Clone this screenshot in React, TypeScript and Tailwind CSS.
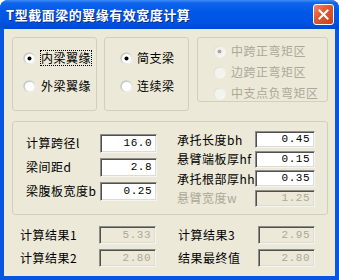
import React from "react";

const F = "font-['Noto_Sans_CJK_SC',sans-serif]";

function Radio({ checked, disabled }: { checked?: boolean; disabled?: boolean }) {
  const id = disabled ? "rgd" : "rge";
  return (
    <svg width="13" height="13" viewBox="0 0 13 13" className="shrink-0">
      <defs>
        <linearGradient id={id} x1="0" y1="0" x2="1" y2="1">
          <stop offset="0" stopColor={disabled ? "#dcdad0" : "#b8b8b0"} />
          <stop offset="1" stopColor="#ffffff" />
        </linearGradient>
      </defs>
      <circle cx="6.5" cy="6.5" r="6.2" fill={`url(#${id})`} />
      <circle cx="6.5" cy="6.5" r="4.6" fill={disabled ? "#f4f3ee" : "#ffffff"} />
      {checked && <circle cx="6.5" cy="6.5" r="2" fill={disabled ? "#aca899" : "#000000"} />}
    </svg>
  );
}

function RadioRow({ label, checked, disabled, focus, gap }: { label: string; checked?: boolean; disabled?: boolean; focus?: boolean; gap: string }) {
  return (
    <div className={`flex items-center h-[16px] ${gap}`}>
      <Radio checked={checked} disabled={disabled} />
      <span
        className={`text-[12px] tracking-[0.5px] leading-[14px] whitespace-nowrap ${disabled ? "text-[#aca899]" : "text-black"} ${focus ? "outline outline-1 outline-dotted outline-black" : ""}`}
      >
        {label}
      </span>
    </div>
  );
}

function Input({ value, disabled, h, w }: { value: string; disabled?: boolean; h: string; w: string }) {
  return (
    <div
      className={`${w} ${h} shrink-0 flex items-center justify-end pr-[4px] border border-t-[#8d8d8d] border-l-[#8d8d8d] border-r-[#f4f4f4] border-b-[#f4f4f4] shadow-[inset_1px_1px_0_#505050,inset_-1px_-1px_0_#dcdcd4] font-['Liberation_Mono',monospace] text-[11px] ${disabled ? "bg-[#ece9d8] text-[#aca899]" : "bg-white text-black"}`}
    >
      {value}
    </div>
  );
}

export default function App() {
  return (
    <div className={`w-[339px] h-[280px] bg-white ${F}`}>
      <div className="w-[339px] h-[280px] rounded-t-[8px] bg-[#0a55e0] flex flex-col overflow-hidden">
        {/* title bar */}
        <div className="h-[29px] shrink-0 flex items-center justify-between pl-[6px] pr-[5px] bg-[linear-gradient(to_bottom,#3c8df6_0%,#1064ec_10%,#0058e8_40%,#0054e3_75%,#0048d4_100%)]">
          <span className="text-white font-bold text-[13px] tracking-[0.5px] leading-[16px] whitespace-nowrap [text-shadow:1px_1px_0_#0a2a8a] mt-[1px]">
            T型截面梁的翼缘有效宽度计算
          </span>
          <div className="w-[21px] h-[21px] rounded-[3px] border border-white bg-[linear-gradient(135deg,#f08a6a_0%,#e05a32_40%,#c8401c_100%)] flex items-center justify-center">
            <svg width="11" height="11" viewBox="0 0 11 11">
              <path d="M1.5 1.5 L9.5 9.5 M9.5 1.5 L1.5 9.5" stroke="#ffffff" strokeWidth="2" strokeLinecap="square" />
            </svg>
          </div>
        </div>
        {/* body */}
        <div className="flex-1 mx-[4px] mb-[4px] bg-[#ece9d8] flex flex-col pl-[8px] pt-[8px]">
          {/* top row */}
          <div className="flex items-start">
            <div className="w-[85px] h-[74px] border border-[#d0d0bf] rounded-[3px] flex flex-col pt-[12px] gap-[12px] pl-[10px]">
              <RadioRow label="内梁翼缘" checked focus gap="gap-[5px]" />
              <RadioRow label="外梁翼缘" gap="gap-[5px]" />
            </div>
            <div className="ml-[7px] w-[85px] h-[74px] border border-[#d0d0bf] rounded-[3px] flex flex-col pt-[12px] gap-[12px] pl-[15px]">
              <RadioRow label="简支梁" checked gap="gap-[4px]" />
              <RadioRow label="连续梁" gap="gap-[4px]" />
            </div>
            <div className="ml-[8px] w-[131px] h-[65px] border border-[#d0d0bf] rounded-[3px] flex flex-col pt-[5px] gap-[5px] pl-[15px]">
              <RadioRow label="中跨正弯矩区" checked disabled gap="gap-[5px]" />
              <RadioRow label="边跨正弯矩区" disabled gap="gap-[5px]" />
              <RadioRow label="中支点负弯矩区" disabled gap="gap-[5px]" />
            </div>
          </div>
          {/* middle group */}
          <div className="mt-[10px] w-[316px] h-[94px] border border-[#d0d0bf] rounded-[3px] flex pl-[13px] text-[12px] tracking-[0.5px] text-black">
            <div className="w-[151px] shrink-0 flex flex-col pt-[11px] gap-[4px]">
              {[
                ["计算跨径l", "16.0"],
                ["梁间距d", "2.8"],
                ["梁腹板宽度b", "0.25"],
              ].map(([l, v]) => (
                <div key={l} className="flex items-center h-[20px]">
                  <span className="w-[74px] whitespace-nowrap leading-[14px]">{l}</span>
                  <Input value={v} w="w-[57px]" h="h-[19px]" />
                </div>
              ))}
            </div>
            <div className="flex flex-col pt-[9px] gap-[2.5px]">
              {[
                ["承托长度bh", "0.45", false],
                ["悬臂端板厚hf", "0.15", false],
                ["承托根部厚hh", "0.35", false],
                ["悬臂宽度w", "1.25", true],
              ].map(([l, v, d]) => (
                <div key={l as string} className="flex items-center h-[17px]">
                  <span className={`w-[78px] whitespace-nowrap leading-[14px] ${d ? "text-[#aca899]" : ""}`}>{l as string}</span>
                  <Input value={v as string} disabled={d as boolean} w="w-[60px]" h="h-[17px]" />
                </div>
              ))}
            </div>
          </div>
          {/* results */}
          <div className="mt-[11px] pl-[8px] flex flex-col gap-[5px] text-[12px] tracking-[0.5px] text-black">
            {[
              ["计算结果1", "5.33", "计算结果3", "2.95"],
              ["计算结果2", "2.80", "结果最终值", "2.80"],
            ].map(([a, av, b, bv]) => (
              <div key={a} className="flex items-center h-[18px]">
                <span className="w-[79px] whitespace-nowrap leading-[14px]">{a}</span>
                <Input value={av} disabled w="w-[57px]" h="h-[18px]" />
                <span className="ml-[22px] w-[80px] whitespace-nowrap leading-[14px]">{b}</span>
                <Input value={bv} disabled w="w-[57px]" h="h-[18px]" />
              </div>
            ))}
          </div>
        </div>
      </div>
    </div>
  );
}
